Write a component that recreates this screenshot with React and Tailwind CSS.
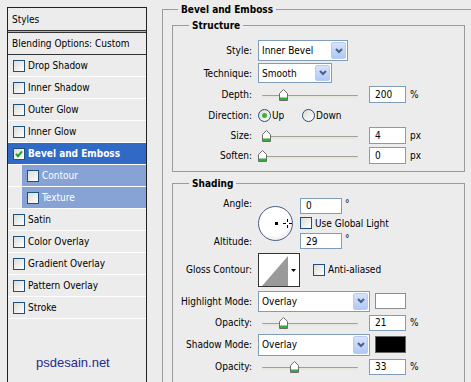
import React from 'react'

const layers = [
  { label: 'Drop Shadow' },
  { label: 'Inner Shadow' },
  { label: 'Outer Glow' },
  { label: 'Inner Glow' },
  { label: 'Bevel and Emboss', checked: true, active: true },
  { label: 'Contour', sub: true },
  { label: 'Texture', sub: true },
  { label: 'Satin' },
  { label: 'Color Overlay' },
  { label: 'Gradient Overlay' },
  { label: 'Pattern Overlay' },
  { label: 'Stroke' },
]

const Checkbox = ({ checked }) => (
  <span className="w-[12px] h-[12px] shrink-0 border border-[#1c5180] bg-gradient-to-br from-[#dcdcd7] to-white flex items-center justify-center">
    {checked && (
      <svg width="8" height="8" viewBox="0 0 8 8">
        <path d="M1 3.8 L3 6.2 L7 1.4" fill="none" stroke="#21a121" strokeWidth="2" />
      </svg>
    )}
  </span>
)

const Radio = ({ checked }) => (
  <span className="w-[13px] h-[13px] shrink-0 rounded-full border border-[#1c5180] bg-gradient-to-br from-[#dcdcd7] to-white flex items-center justify-center">
    {checked && <span className="w-[5px] h-[5px] rounded-full bg-[#3bb33b]" />}
  </span>
)

const Chevron = () => (
  <svg width="8" height="6" viewBox="0 0 8 6">
    <polyline points="1,1 4,4 7,1" fill="none" stroke="#4d6185" strokeWidth="2" />
  </svg>
)

const Select = ({ value, w, h }) => (
  <div className={`flex items-center border border-[#7f9db9] bg-white ${w} ${h}`}>
    <span className="flex-1 pl-[3px]">{value}</span>
    <span className="w-[15px] self-stretch my-[1px] mr-[1px] rounded-[2px] border border-[#b7cbf5] bg-gradient-to-b from-[#d6e3fd] to-[#b1c8f6] flex items-center justify-center">
      <Chevron />
    </span>
  </div>
)

const Input = ({ value, w = 'w-[37px]', h = 'h-[17px]' }) => (
  <div className={`border border-[#7f9db9] bg-white pl-[5px] flex items-center ${w} ${h}`}>{value}</div>
)

const Slider = ({ thumb }) => (
  <div className="relative w-[111px] h-[17px] shrink-0">
    <div className="absolute left-[4px] top-[9px] w-[96px] h-[3px] rounded-[1px] border-t border-[#a09f9a] bg-[#e9e6dc]" />
    <svg className={`absolute top-[3px] ${thumb}`} width="9" height="12" viewBox="0 0 9 12">
      <path d="M0.5 11.5 V4.5 L4.5 0.5 L8.5 4.5 V11.5 Z" fill="#fff" stroke="#6b6b6b" />
      <rect x="1" y="8.5" width="7" height="2.5" fill="#2fae3a" />
    </svg>
  </div>
)

const Row = ({ label, h, children }) => (
  <div className={`flex items-center ${h}`}>
    <div className="w-[79px] shrink-0 text-right">{label}</div>
    <div className="ml-[6px] flex items-center">{children}</div>
  </div>
)

const LayerRow = ({ item }) => {
  if (item.sub) {
    return (
      <div className="h-[22px] pl-[14px] border-b border-white">
        <div className="h-full bg-[#87a2d5] text-white flex items-center gap-[3px] pl-[5px]">
          <Checkbox />
          <span>{item.label}</span>
        </div>
      </div>
    )
  }
  return (
    <div
      className={`h-[22px] border-b border-white flex items-center gap-[3px] pl-[5px] ${
        item.active ? 'bg-[#316ac5] text-white font-bold' : ''
      }`}
    >
      <Checkbox checked={item.checked} />
      <span>{item.label}</span>
    </div>
  )
}

export default function App() {
  return (
    <div className="w-[471px] h-[382px] overflow-hidden bg-[#ececec] flex items-start text-black text-[10px] leading-[13px] font-['DejaVu_Sans_Condensed','Liberation_Sans',sans-serif]">
      {/* Styles list */}
      <div className="ml-[7px] mt-[7px] w-[140px] h-[375px] shrink-0 border-x border-t border-[#222] flex flex-col">
        <div className="h-[22px] flex items-center pl-[4px]">Styles</div>
        <div className="h-[3px] border-y border-[#333] bg-[#b0b0b0]" />
        <div className="h-[22px] flex items-center pl-[4px] border-b border-[#333]">Blending Options: Custom</div>
        {layers.map((item) => (
          <LayerRow key={item.label} item={item} />
        ))}
        <div className="flex-1" />
        <div className="pl-[28px] pb-[13px] text-[13px] text-[#2a2a8c] font-['Liberation_Sans',sans-serif]">psdesain.net</div>
      </div>

      {/* Bevel and Emboss */}
      <fieldset className="ml-[15px] mt-[3px] w-[330px] h-[400px] shrink-0 border border-[#9a9a9a] pl-[9px]">
        <legend className="ml-[6px] px-[3px] font-bold">Bevel and Emboss</legend>

        <fieldset className="mt-[3px] w-[293px] border border-[#9a9a9a]">
          <legend className="ml-[16px] px-[3px] font-bold">Structure</legend>
          <div className="pt-[7px] pb-[6px]">
            <Row label="Style:" h="h-[23px]">
              <Select value="Inner Bevel" w="w-[90px]" h="h-[21px]" />
            </Row>
            <Row label="Technique:" h="h-[22px]">
              <Select value="Smooth" w="w-[74px]" h="h-[20px]" />
            </Row>
            <Row label="Depth:" h="h-[20px]">
              <Slider thumb="left-[21px]" />
              <Input value="200" />
              <span className="ml-[4px]">%</span>
            </Row>
            <Row label="Direction:" h="h-[22px]">
              <div className="w-[44px] flex items-center gap-[1px]">
                <Radio checked />
                <span>Up</span>
              </div>
              <Radio />
              <span className="ml-[1px]">Down</span>
            </Row>
            <Row label="Size:" h="h-[19px]">
              <Slider thumb="left-[4px]" />
              <Input value="4" />
              <span className="ml-[4px]">px</span>
            </Row>
            <Row label="Soften:" h="h-[20px]">
              <Slider thumb="left-[0px]" />
              <Input value="0" />
              <span className="ml-[4px]">px</span>
            </Row>
          </div>
        </fieldset>

        <fieldset className="mt-[5px] w-[293px] h-[260px] border border-[#9a9a9a]">
          <legend className="ml-[16px] px-[3px] font-bold">Shading</legend>
          <div className="pt-[7px]">
            <div className="flex">
              <div className="w-[79px] shrink-0 flex flex-col text-right">
                <div className="h-[17px]">Angle:</div>
                <div className="h-[18px]" />
                <div className="h-[18px] flex items-center justify-end">Altitude:</div>
              </div>
              <div className="ml-[6px] w-[36px] flex items-center">
                <div className="relative w-[35px] h-[35px] rounded-full border-[1.5px] border-[#4a5d83] bg-[radial-gradient(circle_at_40%_35%,#ffffff_55%,#dcdcdc)]">
                  <span className="absolute left-[16px] top-[15px] w-[3px] h-[3px] bg-black" />
                  <svg className="absolute left-[24px] top-[12px]" width="9" height="9" viewBox="0 0 9 9">
                    <path d="M4.5 0 V3 M4.5 6 V9 M0 4.5 H3 M6 4.5 H9" stroke="#000" strokeWidth="1" />
                  </svg>
                </div>
              </div>
              <div className="ml-[6px] flex flex-col">
                <div className="h-[17px] flex items-center">
                  <Input value="0" w="w-[42px]" h="h-[16px]" />
                  <span className="ml-[3px] self-start">°</span>
                </div>
                <div className="h-[18px] flex items-center gap-[3px]">
                  <Checkbox />
                  <span>Use Global Light</span>
                </div>
                <div className="h-[18px] flex items-center">
                  <Input value="29" w="w-[42px]" h="h-[16px]" />
                  <span className="ml-[3px] self-start">°</span>
                </div>
              </div>
            </div>

            <Row label="Gloss Contour:" h="h-[39px]">
              <svg width="42" height="34" viewBox="0 0 42 34">
                <rect x="0.5" y="0.5" width="41" height="33" fill="#fff" stroke="#333" />
                <polygon points="4,33 30,3 30,33" fill="#9a9a9a" />
                <polygon points="33,16 38,16 35.5,19" fill="#000" />
              </svg>
              <div className="ml-[13px] flex items-center gap-[3px]">
                <Checkbox />
                <span>Anti-aliased</span>
              </div>
            </Row>
            <Row label="Highlight Mode:" h="h-[24px]">
              <Select value="Overlay" w="w-[112px]" h="h-[21px]" />
              <span className="ml-[5px] w-[31px] h-[16px] border border-[#8c8c8c] bg-white" />
            </Row>
            <Row label="Opacity:" h="h-[19px]">
              <Slider thumb="left-[21px]" />
              <Input value="21" h="h-[16px]" />
              <span className="ml-[4px]">%</span>
            </Row>
            <Row label="Shadow Mode:" h="h-[25px]">
              <Select value="Overlay" w="w-[112px]" h="h-[22px]" />
              <span className="ml-[5px] w-[31px] h-[17px] border border-[#666] bg-black" />
            </Row>
            <Row label="Opacity:" h="h-[19px]">
              <Slider thumb="left-[32px]" />
              <Input value="33" h="h-[16px]" />
              <span className="ml-[4px]">%</span>
            </Row>
          </div>
        </fieldset>
      </fieldset>
    </div>
  )
}
